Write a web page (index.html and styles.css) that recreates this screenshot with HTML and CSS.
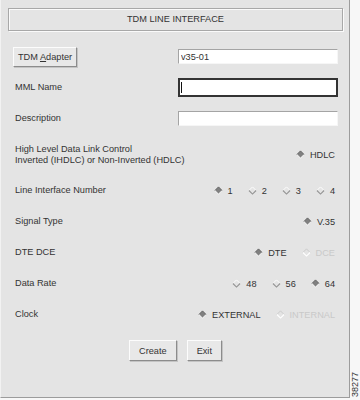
FILE: index.html
```html
<!DOCTYPE html>
<html lang="en">
<head>
<title>TDM Line Interface</title>
<link rel="stylesheet" href="styles.css">
</head>
<body>
<svg class="defs" width="0" height="0">
    <symbol id="d-on" viewBox="0 0 10 10">
        <polygon points="5,1 9,5 5,9 1,5" fill="#808080"/>
        <path d="M1,5 L5,1 L9,5" fill="none" stroke="#5a5a5a" stroke-width="1"/>
        <path d="M1,5 L5,9 L9,5" fill="none" stroke="#ffffff" stroke-width="1"/>
    </symbol>
    <symbol id="d-off" viewBox="0 0 10 10">
        <path d="M1,5 L5,1 L9,5" fill="none" stroke="#ffffff" stroke-width="1"/>
        <path d="M1,5 L5,9 L9,5" fill="none" stroke="#949494" stroke-width="1.2"/>
    </symbol>
    <symbol id="d-dis" viewBox="0 0 10 10">
        <path d="M1,5 L5,1 L9,5" fill="none" stroke="#c8c8c8" stroke-width="1"/>
        <path d="M1,5 L5,9 L9,5" fill="none" stroke="#ffffff" stroke-width="1.2"/>
    </symbol>
</svg>

<div class="page">
    <div class="panel">
        <div class="title">TDM LINE INTERFACE</div>

        <div class="form">
            <div class="row">
                <button type="button" class="btn btn-adapter">TDM <u>A</u>dapter</button>
                <input type="text" class="field" value="v35-01">
            </div>

            <div class="row">
                <label>MML Name</label>
                <div class="field focus"><span class="caret"></span></div>
            </div>

            <div class="row">
                <label>Description</label>
                <input type="text" class="field" value="">
            </div>

            <div class="row tall">
                <label>High Level Data Link Control<br>Inverted (IHDLC) or Non-Inverted (HDLC)</label>
                <div class="opts">
                    <span class="opt"><svg><use href="#d-on"/></svg>HDLC</span>
                </div>
            </div>

            <div class="row">
                <label>Line Interface Number</label>
                <div class="opts">
                    <span class="opt"><svg><use href="#d-on"/></svg>1</span>
                    <span class="opt"><svg><use href="#d-off"/></svg>2</span>
                    <span class="opt"><svg><use href="#d-off"/></svg>3</span>
                    <span class="opt"><svg><use href="#d-off"/></svg>4</span>
                </div>
            </div>

            <div class="row">
                <label>Signal Type</label>
                <div class="opts">
                    <span class="opt"><svg><use href="#d-on"/></svg>V.35</span>
                </div>
            </div>

            <div class="row">
                <label>DTE DCE</label>
                <div class="opts">
                    <span class="opt"><svg><use href="#d-on"/></svg>DTE</span>
                    <span class="opt disabled"><svg><use href="#d-dis"/></svg>DCE</span>
                </div>
            </div>

            <div class="row">
                <label>Data Rate</label>
                <div class="opts">
                    <span class="opt"><svg><use href="#d-off"/></svg>48</span>
                    <span class="opt"><svg><use href="#d-off"/></svg>56</span>
                    <span class="opt"><svg><use href="#d-on"/></svg>64</span>
                </div>
            </div>

            <div class="row">
                <label>Clock</label>
                <div class="opts">
                    <span class="opt"><svg><use href="#d-on"/></svg>EXTERNAL</span>
                    <span class="opt disabled"><svg><use href="#d-dis"/></svg>INTERNAL</span>
                </div>
            </div>
        </div>

        <div class="actions">
            <button type="button" class="btn">Create</button>
            <button type="button" class="btn">Exit</button>
        </div>
    </div>

    <div class="side">
        <span class="figno">38277</span>
    </div>
</div>
</body>
</html>
```

FILE: styles.css
```css
body {
    margin: 0;
    background-color: #f7f7f7;
    font-family: "Liberation Sans", Arial, sans-serif;
    font-size: 9.2px;
    color: #333;
}

.defs {
    position: absolute;
    width: 0;
    height: 0;
}

.page {
    display: flex;
    width: 360px;
    height: 400px;
}

/* the dialog window */
.panel {
    box-sizing: border-box;
    width: 351px;
    height: 398px;
    background-color: #e4e4e4;
    border-left: 1px solid #f2f2f2;
    border-right: 1px solid #9c9c9c;
    border-bottom: 1px solid #9c9c9c;
    padding: 8px 6px 0 7px;
}

.title {
    box-sizing: border-box;
    height: 23px;
    line-height: 21px;
    text-align: center;
    border: 1px solid #a8a8a8;
    box-shadow: inset 1px 1px 0 #fafafa, 1px 1px 0 #fafafa;
}

.form {
    margin-top: 10px;
    padding: 0 5px 0 7px;
}

.row {
    display: flex;
    align-items: center;
    justify-content: space-between;
    height: 31px;
}

.row.tall {
    height: 41px;
}

label {
    line-height: 11px;
}

.field {
    box-sizing: border-box;
    width: 160px;
    height: 15px;
    margin: 0;
    padding: 0 2px;
    background-color: #fff;
    border: 1px solid;
    border-color: #a4a4a4 #f6f6f6 #f6f6f6 #a4a4a4;
    font: inherit;
    color: #333;
    outline: none;
}

.field.focus {
    display: flex;
    align-items: center;
    height: 19px;
    border: 2px solid #333;
    padding: 0 1px;
}

.caret {
    width: 1px;
    height: 11px;
    background-color: #111;
}

.btn {
    box-sizing: border-box;
    height: 20px;
    padding: 0 4px;
    background-color: #e8e8e8;
    border: 1px solid;
    border-color: #fcfcfc #8c8c8c #8c8c8c #fcfcfc;
    box-shadow: 1px 1px 0 #c4c4c4;
    font: inherit;
    color: #333;
    cursor: pointer;
}

.btn-adapter {
    margin-left: -2px;
}

.opts {
    display: flex;
    gap: 15px;
    padding-right: 3px;
}

.opt {
    display: flex;
    align-items: center;
    gap: 5px;
}

.opt svg {
    width: 9px;
    height: 9px;
}

.opt.disabled {
    color: #c9c9c9;
}

.actions {
    display: flex;
    justify-content: center;
    gap: 10px;
    margin-top: 10px;
}

.actions .btn {
    height: 21px;
    padding: 0 9px;
}

.side {
    flex: 1;
    display: flex;
    align-items: flex-end;
    justify-content: center;
    padding-bottom: 3px;
}

.figno {
    writing-mode: vertical-rl;
    transform: rotate(180deg);
    font-size: 9px;
    color: #333;
}
```
